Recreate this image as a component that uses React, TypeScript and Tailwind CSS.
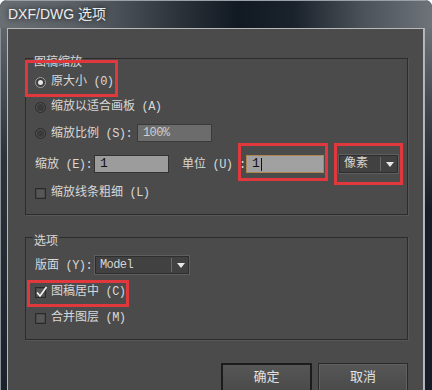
import React from 'react';

const font = "font-['Liberation_Mono','Noto_Sans_CJK_SC',monospace]";

function Label({ cn, en }: { cn: string; en?: string }) {
  return (
    <span className="whitespace-nowrap text-[12px] leading-[16px] text-[#d8d8d8]">
      {cn}
      {en && <span className="text-[12px] tracking-[-0.6px]">{en}</span>}
    </span>
  );
}

function Radio({ checked }: { checked?: boolean }) {
  return (
    <span
      className={
        checked
          ? 'flex h-[11px] w-[11px] shrink-0 items-center justify-center rounded-full border border-[#a0a0a0] bg-[#3c3c3c]'
          : 'flex h-[11px] w-[11px] shrink-0 items-center justify-center rounded-full border border-[#2c2c2c] bg-[#3a3a3a] shadow-[inset_0_0_0_1px_#555]'
      }
    >
      {checked && <span className="h-[5px] w-[5px] rounded-full bg-[#e6e6e6]" />}
    </span>
  );
}

function Check({ checked }: { checked?: boolean }) {
  return (
    <span className="relative h-[11px] w-[11px] shrink-0 border border-[#2a2a2a] bg-[#575757] shadow-[inset_0_0_0_1px_#4a4a4a]">
      {checked && (
        <svg className="absolute -left-[1px] -top-[3px]" width="13" height="14" viewBox="0 0 13 14">
          <path d="M2 7.5 L5 11 L11.5 2" fill="none" stroke="#f2f2f2" strokeWidth="1.7" />
        </svg>
      )}
    </span>
  );
}

function Select({ value, w, mono }: { value: string; w: string; mono?: boolean }) {
  return (
    <div className={`flex h-[20px] ${w} shrink-0 items-center border border-[#5e5e5e] bg-[#414141] shadow-[inset_0_0_0_1px_#2e2e2e]`}>
      <span className={`flex-1 pl-[5px] ${mono ? 'text-[12px] tracking-[-0.6px]' : 'text-[12px]'} leading-[16px] text-[#d4d4d4]`}>{value}</span>
      <span className="h-[14px] w-px bg-[#6a6a6a]" />
      <span className="flex w-[17px] justify-center">
        <svg width="8" height="5" viewBox="0 0 8 5">
          <path d="M0 0 H8 L4 5 Z" fill="#e8e8e8" />
        </svg>
      </span>
    </div>
  );
}

function Red({ cls }: { cls: string }) {
  return <div className={`pointer-events-none absolute border-[3px] border-[#e0383d] ${cls}`} />;
}

export default function App() {
  return (
    <div className={`relative h-[390px] w-[432px] overflow-hidden bg-white ${font}`}>
      <div className="flex h-full flex-col overflow-hidden rounded-t-[7px] bg-[#1a212a]">
        {/* title bar */}
        <div className="flex h-[28px] shrink-0 items-center border-t border-[#9aa0a6] bg-[linear-gradient(90deg,#6a6f74_0%,#565c62_22%,#2a3139_42%,#111922_55%,#1a222c_68%,#4b5259_84%,#6d7379_100%)] pl-[8px]">
          <span className="font-['Liberation_Sans','Noto_Sans_CJK_SC',sans-serif] text-[14px] text-[#ececec] [text-shadow:0_0_6px_#000]">
            DXF/DWG 选项
          </span>
        </div>

        <div className="flex flex-1">
          <div className="w-[7px] shrink-0 border-l border-[#8b9096] bg-[linear-gradient(180deg,#5f656b_0%,#2c333b_35%,#1a212a_100%)]" />

          <div className="flex flex-1 flex-col border-l border-r border-t border-[#b9b9b9] bg-[#4b4b4b] pl-[17px] pr-[15px] pt-[29px]">
            {/* 图稿缩放 */}
            <div className="relative h-[157px] border border-[#2c2c2c] pl-[9px] pt-[13px] shadow-[1px_1px_0_#575757]">
              <span className="absolute -top-[9px] left-[7px] bg-[#4b4b4b] px-[1px]">
                <Label cn="图稿缩放" />
              </span>
              <div className="flex h-[20px] items-center gap-[5px]">
                <Radio checked />
                <Label cn="原大小" en=" (0)" />
              </div>
              <div className="mt-[5px] flex h-[20px] items-center gap-[5px]">
                <Radio />
                <Label cn="缩放以适合画板" en=" (A)" />
              </div>
              <div className="mt-[6px] flex h-[20px] items-center gap-[5px]">
                <Radio />
                <span className="w-[81px]">
                  <Label cn="缩放比例" en=" (S):" />
                </span>
                <div className="flex h-[18px] w-[75px] items-center border border-[#3a3a3a] bg-[#6c6c6c] pl-[5px] text-[12px] tracking-[-0.6px] text-[#d0d0d0]">
                  100%
                </div>
              </div>
              <div className="mt-[11px] flex h-[20px] items-center">
                <span className="w-[59px] shrink-0">
                  <Label cn="缩放" en=" (E):" />
                </span>
                <div className="flex h-[18px] w-[75px] shrink-0 items-center border border-[#333] bg-[#9c9c9c] pl-[5px] text-[13px] text-[#111]">
                  1
                </div>
                <span className="ml-[13px] w-[64px] shrink-0">
                  <Label cn="单位" en=" (U) :" />
                </span>
                <div className="flex h-[18px] w-[78px] shrink-0 items-center border border-[#b08650] bg-[#a1a1a1] pl-[5px] text-[13px] text-[#111]">
                  1<span className="ml-[1px] h-[13px] w-px bg-[#111]" />
                </div>
                <div className="ml-[14px]">
                  <Select value="像素" w="w-[61px]" />
                </div>
              </div>
              <div className="mt-[9px] flex h-[20px] items-center gap-[5px]">
                <Check />
                <Label cn="缩放线条粗细" en=" (L)" />
              </div>
            </div>

            {/* 选项 */}
            <div className="relative mt-[22px] h-[103px] border border-[#2c2c2c] pl-[9px] pt-[17px] shadow-[1px_1px_0_#575757]">
              <span className="absolute -top-[9px] left-[7px] bg-[#4b4b4b] px-[1px]">
                <Label cn="选项" />
              </span>
              <div className="flex h-[20px] items-center">
                <span className="w-[59px] shrink-0">
                  <Label cn="版面" en=" (Y):" />
                </span>
                <Select value="Model" w="w-[96px]" mono />
              </div>
              <div className="mt-[7px] flex h-[20px] items-center gap-[5px]">
                <Check checked />
                <Label cn="图稿居中" en=" (C)" />
              </div>
              <div className="mt-[6px] flex h-[20px] items-center gap-[5px]">
                <Check />
                <Label cn="合并图层" en=" (M)" />
              </div>
            </div>

            {/* buttons */}
            <div className="mt-[23px] flex justify-end gap-[6px]">
              <button className="h-[30px] w-[91px] border-2 border-[#1c1c1c] bg-[linear-gradient(180deg,#565656,#4a4a4a)] text-[13px] text-[#e2e2e2]">
                确定
              </button>
              <button className="h-[30px] w-[90px] border border-[#2a2a2a] bg-[linear-gradient(180deg,#565656,#4a4a4a)] text-[13px] text-[#e2e2e2] shadow-[inset_0_0_0_1px_#606060]">
                取消
              </button>
            </div>
          </div>

          <div className="w-[8px] shrink-0 border-l border-[#b0b4b8] bg-[linear-gradient(180deg,#6b7177_0%,#3a4149_25%,#161d26_50%,#161d26_100%)]" />
        </div>
      </div>

      {/* annotation boxes */}
      <Red cls="left-[25px] top-[60px] h-[37px] w-[93px]" />
      <Red cls="left-[238px] top-[143px] h-[38px] w-[90px]" />
      <Red cls="left-[334px] top-[143px] h-[42px] w-[69px]" />
      <Red cls="left-[27px] top-[280px] h-[27px] w-[102px]" />
    </div>
  );
}
